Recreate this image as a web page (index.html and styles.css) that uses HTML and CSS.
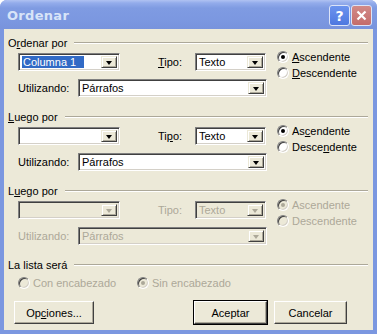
FILE: index.html
```html
<!DOCTYPE html>
<html lang="es">
<head>
    <meta charset="UTF-8">
    <meta name="viewport" content="width=device-width, initial-scale=1.0">
    <title>Ordenar</title>
    <link rel="stylesheet" href="styles.css">
</head>
<body>
    <div class="window">
        <div class="titlebar">
            <span class="title">Ordenar</span>
            <div class="capbtns">
                <div class="cap help">?</div>
                <div class="cap close">
                    <svg width="11" height="11" viewBox="0 0 11 11"><path d="M1.5 1.5 L9.5 9.5 M9.5 1.5 L1.5 9.5" stroke="#fff" stroke-width="2.2" fill="none"/></svg>
                </div>
            </div>
        </div>
        <div class="client">
            <!-- ordenar por -->
            <div class="group">
                <div class="legend"><span>O<u>r</u>denar por</span><div class="sep"></div></div>
                <div class="body">
                    <div class="fields">
                        <div class="line">
                            <div class="combo key"><span class="val"><span class="sel">Columna 1</span></span><span class="drop"><i></i></span></div>
                            <span class="lbl tipo"><u>T</u>ipo:</span>
                            <div class="combo type"><span class="val">Texto</span><span class="drop"><i></i></span></div>
                        </div>
                        <div class="line second">
                            <span class="lbl util">Utilizando:</span>
                            <div class="combo wide"><span class="val">Párrafos</span><span class="drop"><i></i></span></div>
                        </div>
                    </div>
                    <div class="radios">
                        <div class="radio"><span class="dot on"></span><span><u>A</u>scendente</span></div>
                        <div class="radio"><span class="dot"></span><span><u>D</u>escendente</span></div>
                    </div>
                </div>
            </div>

            <!-- luego por -->
            <div class="group">
                <div class="legend"><span><u>L</u>uego por</span><div class="sep"></div></div>
                <div class="body">
                    <div class="fields">
                        <div class="line">
                            <div class="combo key"><span class="val"></span><span class="drop"><i></i></span></div>
                            <span class="lbl tipo">Ti<u>p</u>o:</span>
                            <div class="combo type"><span class="val">Texto</span><span class="drop"><i></i></span></div>
                        </div>
                        <div class="line second">
                            <span class="lbl util">Utilizando:</span>
                            <div class="combo wide"><span class="val">Párrafos</span><span class="drop"><i></i></span></div>
                        </div>
                    </div>
                    <div class="radios">
                        <div class="radio"><span class="dot on"></span><span>As<u>c</u>endente</span></div>
                        <div class="radio"><span class="dot"></span><span>Desce<u>n</u>dente</span></div>
                    </div>
                </div>
            </div>

            <!-- luego por (desactivado) -->
            <div class="group off">
                <div class="legend"><span>L<u>u</u>ego por</span><div class="sep"></div></div>
                <div class="body">
                    <div class="fields">
                        <div class="line">
                            <div class="combo key"><span class="val"></span><span class="drop"><i></i></span></div>
                            <span class="lbl tipo">Tipo:</span>
                            <div class="combo type"><span class="val">Texto</span><span class="drop"><i></i></span></div>
                        </div>
                        <div class="line second">
                            <span class="lbl util">Utilizando:</span>
                            <div class="combo wide"><span class="val">Párrafos</span><span class="drop"><i></i></span></div>
                        </div>
                    </div>
                    <div class="radios">
                        <div class="radio"><span class="dot on"></span><span>Ascendente</span></div>
                        <div class="radio"><span class="dot"></span><span>Descendente</span></div>
                    </div>
                </div>
            </div>

            <div class="lista off">
                <div class="legend"><span>La lista será</span><div class="sep"></div></div>
                <div class="lista-radios">
                    <div class="radio con"><span class="dot"></span><span>Con encabezado</span></div>
                    <div class="radio sin"><span class="dot on"></span><span>Sin encabezado</span></div>
                </div>
            </div>

            <div class="buttons">
                <div class="btn opciones">Op<u>c</u>iones...</div>
                <div class="btn default">Aceptar</div>
                <div class="btn">Cancelar</div>
            </div>
        </div>
    </div>
</body>
</html>
```

FILE: styles.css
```css
body {
    margin: 0;
    background: #fff;
    font-family: "Liberation Sans", Arial, sans-serif;
    font-size: 11px;
    color: #000;
}
.window {
    width: 377px;
    height: 334px;
    background: #7b97e0;
    border-radius: 7px 7px 0 0;
    display: flex;
    flex-direction: column;
}
.titlebar {
    height: 29px;
    flex-shrink: 0;
    display: flex;
    align-items: center;
    justify-content: space-between;
    padding: 0 5px 0 7px;
    border-radius: 7px 7px 0 0;
    background: linear-gradient(#b0c2f2 0px, #93aceb 3px, #7f9be2 8px, #7b97e0 22px, #7893dc 29px);
}
.title {
    font-family: "DejaVu Sans", sans-serif;
    font-weight: bold;
    font-size: 13px;
    color: #d8e4f8;
    letter-spacing: 0.3px;
    margin-top: 1px;
}
.capbtns {
    display: flex;
    gap: 1px;
    margin-top: 2px;
}
.cap {
    width: 19px;
    height: 19px;
    border: 1px solid #dce4f8;
    border-radius: 3px;
    display: flex;
    align-items: center;
    justify-content: center;
}
.help {
    background: linear-gradient(#6b93ee, #4e78e0);
    color: #fff;
    font-family: "DejaVu Sans", sans-serif;
    font-weight: bold;
    font-size: 14px;
}
.close {
    background: linear-gradient(#d28a88, #c46c6a);
}
.client {
    flex: 1;
    margin: 0 4px 4px 4px;
    background: #ece9d8;
    padding: 7px 5px 0 4px;
    overflow: hidden;
}

/* groups */
.group {
    height: 74px;
}
.legend {
    display: flex;
    align-items: center;
    height: 13px;
    gap: 7px;
    white-space: nowrap;
}
.sep {
    flex: 1;
    border-top: 1px solid #aca899;
    border-bottom: 1px solid #fff;
}
.body {
    display: flex;
    margin-top: 4px;
    margin-left: 10px;
}
.line {
    display: flex;
    align-items: center;
    height: 18px;
}
.line.second {
    margin-top: 8px;
}
.lbl.tipo {
    margin-left: 38px;
    width: 37px;
}
.lbl.util {
    width: 60px;
}

/* combo boxes */
.combo {
    height: 18px;
    box-sizing: border-box;
    border: 1px solid;
    border-color: #808080 #fff #fff #808080;
    box-shadow: inset 1px 1px #404040, inset -1px -1px #d4d0c8;
    background: #fff;
    display: flex;
    align-items: stretch;
    padding: 2px;
}
.combo.key { width: 102px; }
.combo.type { width: 71px; }
.combo.wide { width: 189px; }
.val {
    flex: 1;
    display: flex;
    align-items: center;
    padding-left: 1px;
    overflow: hidden;
}
.sel {
    background: #316ac5;
    color: #fff;
    padding: 0 8px 0 1px;
    height: 12px;
    line-height: 12px;
}
.drop {
    width: 16px;
    box-sizing: border-box;
    background: #ece9d8;
    border: 1px solid;
    border-color: #ece9d8 #404040 #404040 #ece9d8;
    box-shadow: inset 1px 1px #fff, inset -1px -1px #aca899;
    display: flex;
    align-items: center;
    justify-content: center;
}
.drop i {
    width: 0;
    height: 0;
    border-left: 3.5px solid transparent;
    border-right: 3.5px solid transparent;
    border-top: 4px solid #000;
    margin-top: 1px;
}

/* radios */
.radios {
    margin-left: 10px;
    margin-top: -4px;
}
.radio {
    display: flex;
    align-items: center;
    height: 16px;
    gap: 3px;
}
.dot {
    width: 12px;
    height: 12px;
    box-sizing: border-box;
    border-radius: 50%;
    border: 1px solid;
    border-color: #808080 #fff #fff #808080;
    box-shadow: inset 1px 1px #404040, inset -1px -1px #d4d0c8;
    background: #fff;
    display: flex;
    align-items: center;
    justify-content: center;
}
.dot.on::after {
    content: "";
    width: 4px;
    height: 4px;
    border-radius: 50%;
    background: #000;
}

/* disabled */
.off .body,
.off .radio {
    color: #aca899;
}
.off .combo,
.off .dot {
    background: #ece9d8;
}
.off .drop i {
    border-top-color: #aca899;
}
.off .dot.on::after {
    background: #aca899;
}

/* la lista */
.lista-radios {
    display: flex;
    margin: 3px 0 0 10px;
    height: 17px;
    align-items: center;
}
.radio.con {
    width: 119px;
}

/* buttons */
.buttons {
    display: flex;
    margin: 10px 0 0 2px;
}
.btn {
    width: 73px;
    height: 23px;
    box-sizing: border-box;
    border: 1px solid;
    border-color: #fff #404040 #404040 #fff;
    box-shadow: inset -1px -1px #aca899;
    display: flex;
    align-items: center;
    justify-content: center;
    margin-left: 7px;
}
.btn.opciones {
    width: 80px;
    margin-left: 4px;
    margin-right: 93px;
}
.btn.default {
    outline: 1px solid #000;
    outline-offset: 0;
}
```
